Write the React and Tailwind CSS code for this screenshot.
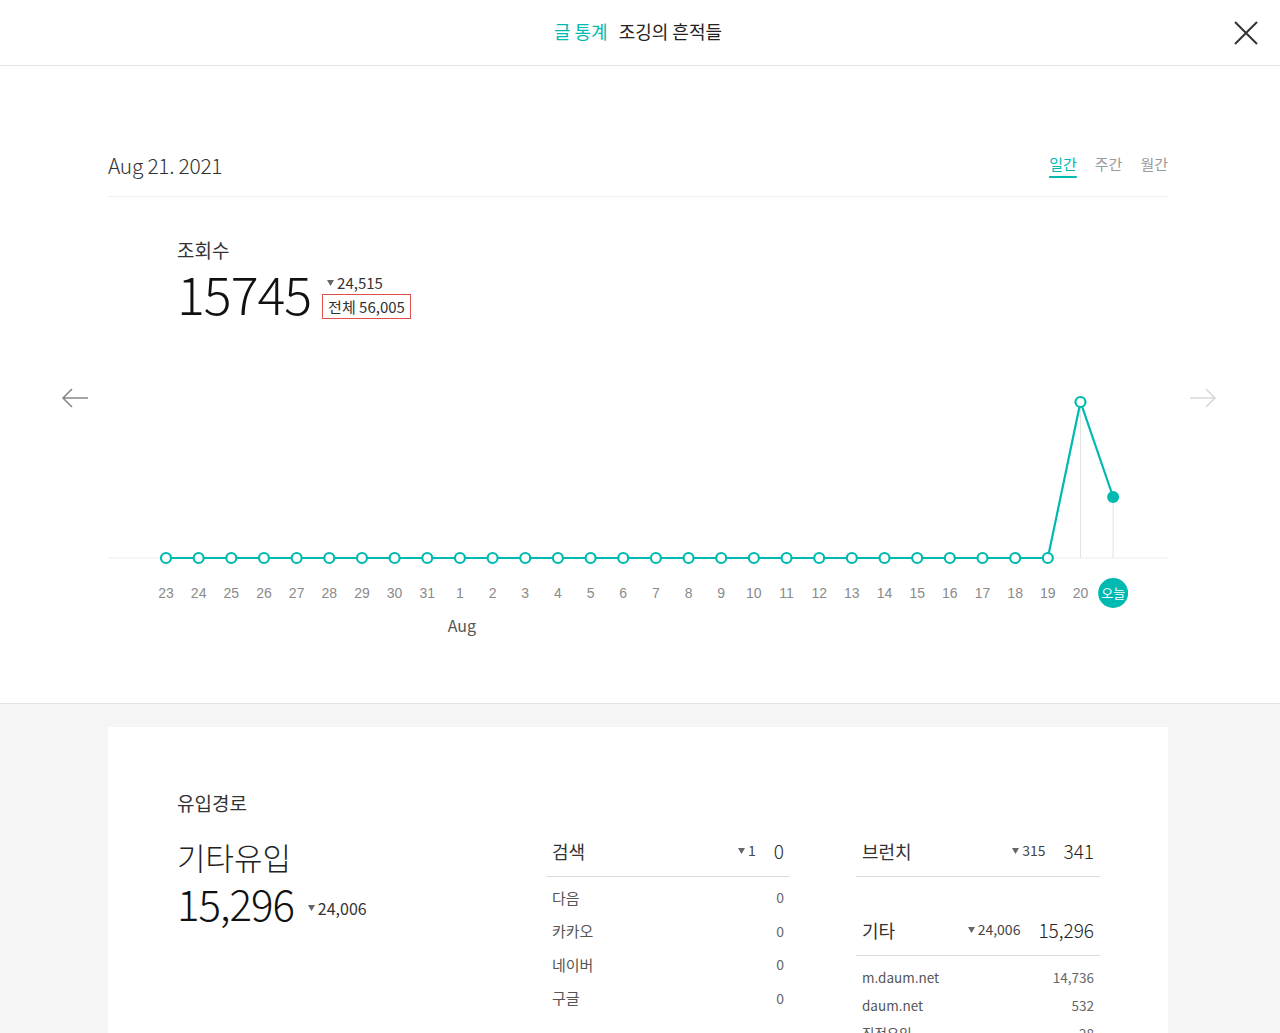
import { useMemo } from "react";

const TEAL = "#00b9b0";

const days = [23, 24, 25, 26, 27, 28, 29, 30, 31, 1, 2, 3, 4, 5, 6, 7, 8, 9, 10, 11, 12, 13, 14, 15, 16, 17, 18, 19, 20];
const views = [...Array(28).fill(0), 40260, 15745];

const searchRows = [
  ["다음", "0"],
  ["카카오", "0"],
  ["네이버", "0"],
  ["구글", "0"],
];

const etcRows = [
  ["m.daum.net", "14,736"],
  ["daum.net", "532"],
  ["직접유입", "28"],
];

const Down = ({ className = "" }) => (
  <svg width="7" height="6" viewBox="0 0 7 6" className={`inline-block ${className}`}>
    <polygon points="0,0 7,0 3.5,6" fill="#666" />
  </svg>
);

const Arrow = ({ dir, color }) => (
  <svg width="28" height="20" viewBox="0 0 28 20" fill="none" stroke={color} strokeWidth="1.6">
    {dir === "left" ? (
      <path d="M27 10H2M11 1L2 10l9 9" />
    ) : (
      <path d="M1 10h25M17 1l9 9-9 9" />
    )}
  </svg>
);

const ViewChart = () => {
  const base = 197;
  const top = 41;
  const x0 = 58;
  const step = 32.66;
  const max = Math.max(...views);

  const pts = useMemo(
    () => views.map((v, i) => [x0 + i * step, base - (v / max) * (base - top)]),
    [max]
  );

  return (
    <svg width="1060" height="290" className="block" style={{ fontFamily: '"Liberation Sans", Arial, sans-serif' }}>
      <line x1="0" y1={base} x2="1060" y2={base} stroke="#eeeeee" />
      <line x1={pts[28][0]} y1={pts[28][1]} x2={pts[28][0]} y2={base} stroke="#e2e2e2" />
      <line x1={pts[29][0]} y1={pts[29][1]} x2={pts[29][0]} y2={base} stroke="#e2e2e2" />
      <polyline points={pts.map((p) => p.join(",")).join(" ")} fill="none" stroke={TEAL} strokeWidth="2.2" />
      {pts.slice(0, 29).map(([x, y], i) => (
        <circle key={i} cx={x} cy={y} r="5" fill="#fff" stroke={TEAL} strokeWidth="2.2" />
      ))}
      <circle cx={pts[29][0]} cy={pts[29][1]} r="6" fill={TEAL} />

      {days.map((d, i) => (
        <text key={d + "-" + i} x={x0 + i * step} y="237" textAnchor="middle" fontSize="14" fill="#8a8a8a">
          {d}
        </text>
      ))}
      <circle cx={pts[29][0]} cy="232" r="15" fill={TEAL} />
      <text
        x={pts[29][0]}
        y="237"
        textAnchor="middle"
        fontSize="13"
        fill="#fff"
        style={{ fontFamily: '"Noto Sans CJK KR", sans-serif' }}
      >
        오늘
      </text>
      <text
        x={x0 + 9 * step + 2}
        y="271"
        textAnchor="middle"
        fontSize="16"
        fill="#555"
        style={{ fontFamily: '"Noto Sans CJK KR", sans-serif' }}
      >
        Aug
      </text>
    </svg>
  );
};

const GroupHead = ({ label, diff, total }) => (
  <div className="flex items-center h-[46px] pb-[4px] px-[6px] border-b border-[#dcdcdc]">
    <span className="text-[18px] text-[#333]">{label}</span>
    <span className="ml-auto flex items-center gap-[3px] text-[14px] text-[#444] -mt-[2px]">
      <Down />
      {diff}
    </span>
    <span className="ml-[18px] text-[19px] font-light text-[#222]">{total}</span>
  </div>
);

export default function App() {
  return (
    <div className="min-h-screen bg-white text-[#333]" style={{ fontFamily: '"Noto Sans CJK KR", "Noto Sans", sans-serif' }}>
      <header className="relative h-[66px] border-b border-[#e3e3e3] flex items-center justify-center">
        <h1 className="text-[18px] font-normal ml-[-4px] mt-[-3px]">
          <span style={{ color: TEAL }}>글 통계</span>
          <span className="ml-[11px] text-[#222]">조깅의 흔적들</span>
        </h1>
        <button className="absolute right-[22px] top-[21px]">
          <svg width="24" height="24" viewBox="0 0 24 24" stroke="#333" strokeWidth="2" fill="none">
            <path d="M1 1l22 22M23 1L1 23" />
          </svg>
        </button>
      </header>

      <main className="w-[1060px] ml-[108px] pt-[85px]">
        <div className="flex items-center justify-between pb-[17px] border-b border-[#efefef]">
          <div className="text-[21px] font-light text-[#333] leading-[28px] tracking-[-0.3px]">Aug 21. 2021</div>
          <nav className="flex gap-[18px] text-[15px] mt-[-2px]">
            <span className="underline underline-offset-[6px] decoration-[1.5px]" style={{ color: TEAL }}>
              일간
            </span>
            <span className="text-[#9a9a9a]">주간</span>
            <span className="text-[#9a9a9a]">월간</span>
          </nav>
        </div>

        <div className="pl-[69px] pt-[40px]">
          <div className="text-[19px] text-[#333] leading-[26px]">조회수</div>
          <div className="flex items-start mt-[1px]">
            <div className="text-[52px] font-extralight leading-[58px] tracking-[-1px] text-[#111]">15745</div>
            <div className="ml-[11px] mt-[9px] flex flex-col items-start">
              <span className="flex items-center gap-[3px] text-[15px] text-[#333] leading-[20px] ml-[5px]">
                <Down />
                24,515
              </span>
              <span className="mt-[1px] border-[1.5px] border-[#e0504a] px-[5px] text-[15px] leading-[23px] text-[#333]">
                전체 56,005
              </span>
            </div>
          </div>
        </div>
      </main>

      <section className="flex mt-[39px]">
        <div className="w-[108px] flex justify-end pr-[19px] pt-[27px]">
          <Arrow dir="left" color="#888" />
        </div>
        <ViewChart />
        <div className="pl-[21px] pt-[27px]">
          <Arrow dir="right" color="#d8d8d8" />
        </div>
      </section>

      <section className="mt-[52px] border-t border-[#e2e2e2] bg-[#f5f5f5] pt-[23px] pb-[40px]">
        <div className="w-[1060px] ml-[108px] bg-white pl-[69px] pt-[63px] pb-[40px]">
          <div className="text-[19px] text-[#333] leading-[26px]">유입경로</div>
          <div className="flex mt-[15px]">
            <div className="w-[369px] pt-[6px]">
              <div className="text-[31px] font-light text-[#222] leading-[40px]">기타유입</div>
              <div className="flex items-end">
                <span className="text-[42px] font-extralight text-[#111] leading-[52px] tracking-[-1px]">15,296</span>
                <span className="ml-[14px] mb-[9px] flex items-center gap-[3px] text-[16px] text-[#333]">
                  <Down />
                  24,006
                </span>
              </div>
            </div>

            <div className="w-[244px]">
              <GroupHead label="검색" diff="1" total="0" />
              <ul className="pt-[4px] text-[15px] text-[#555]">
                {searchRows.map(([k, v]) => (
                  <li key={k} className="flex justify-between px-[6px] h-[33.5px] items-center">
                    <span>{k}</span>
                    <span className="text-[14px] text-[#666]">{v}</span>
                  </li>
                ))}
              </ul>
            </div>

            <div className="w-[244px] ml-[66px]">
              <GroupHead label="브런치" diff="315" total="341" />
              <div className="mt-[33px]">
                <GroupHead label="기타" diff="24,006" total="15,296" />
              </div>
              <ul className="pt-[7px] text-[13.5px] text-[#555]">
                {etcRows.map(([k, v]) => (
                  <li key={k} className="flex justify-between px-[6px] h-[28px] items-center">
                    <span>{k}</span>
                    <span className="text-[#666]">{v}</span>
                  </li>
                ))}
              </ul>
            </div>
          </div>
        </div>
      </section>
    </div>
  );
}
